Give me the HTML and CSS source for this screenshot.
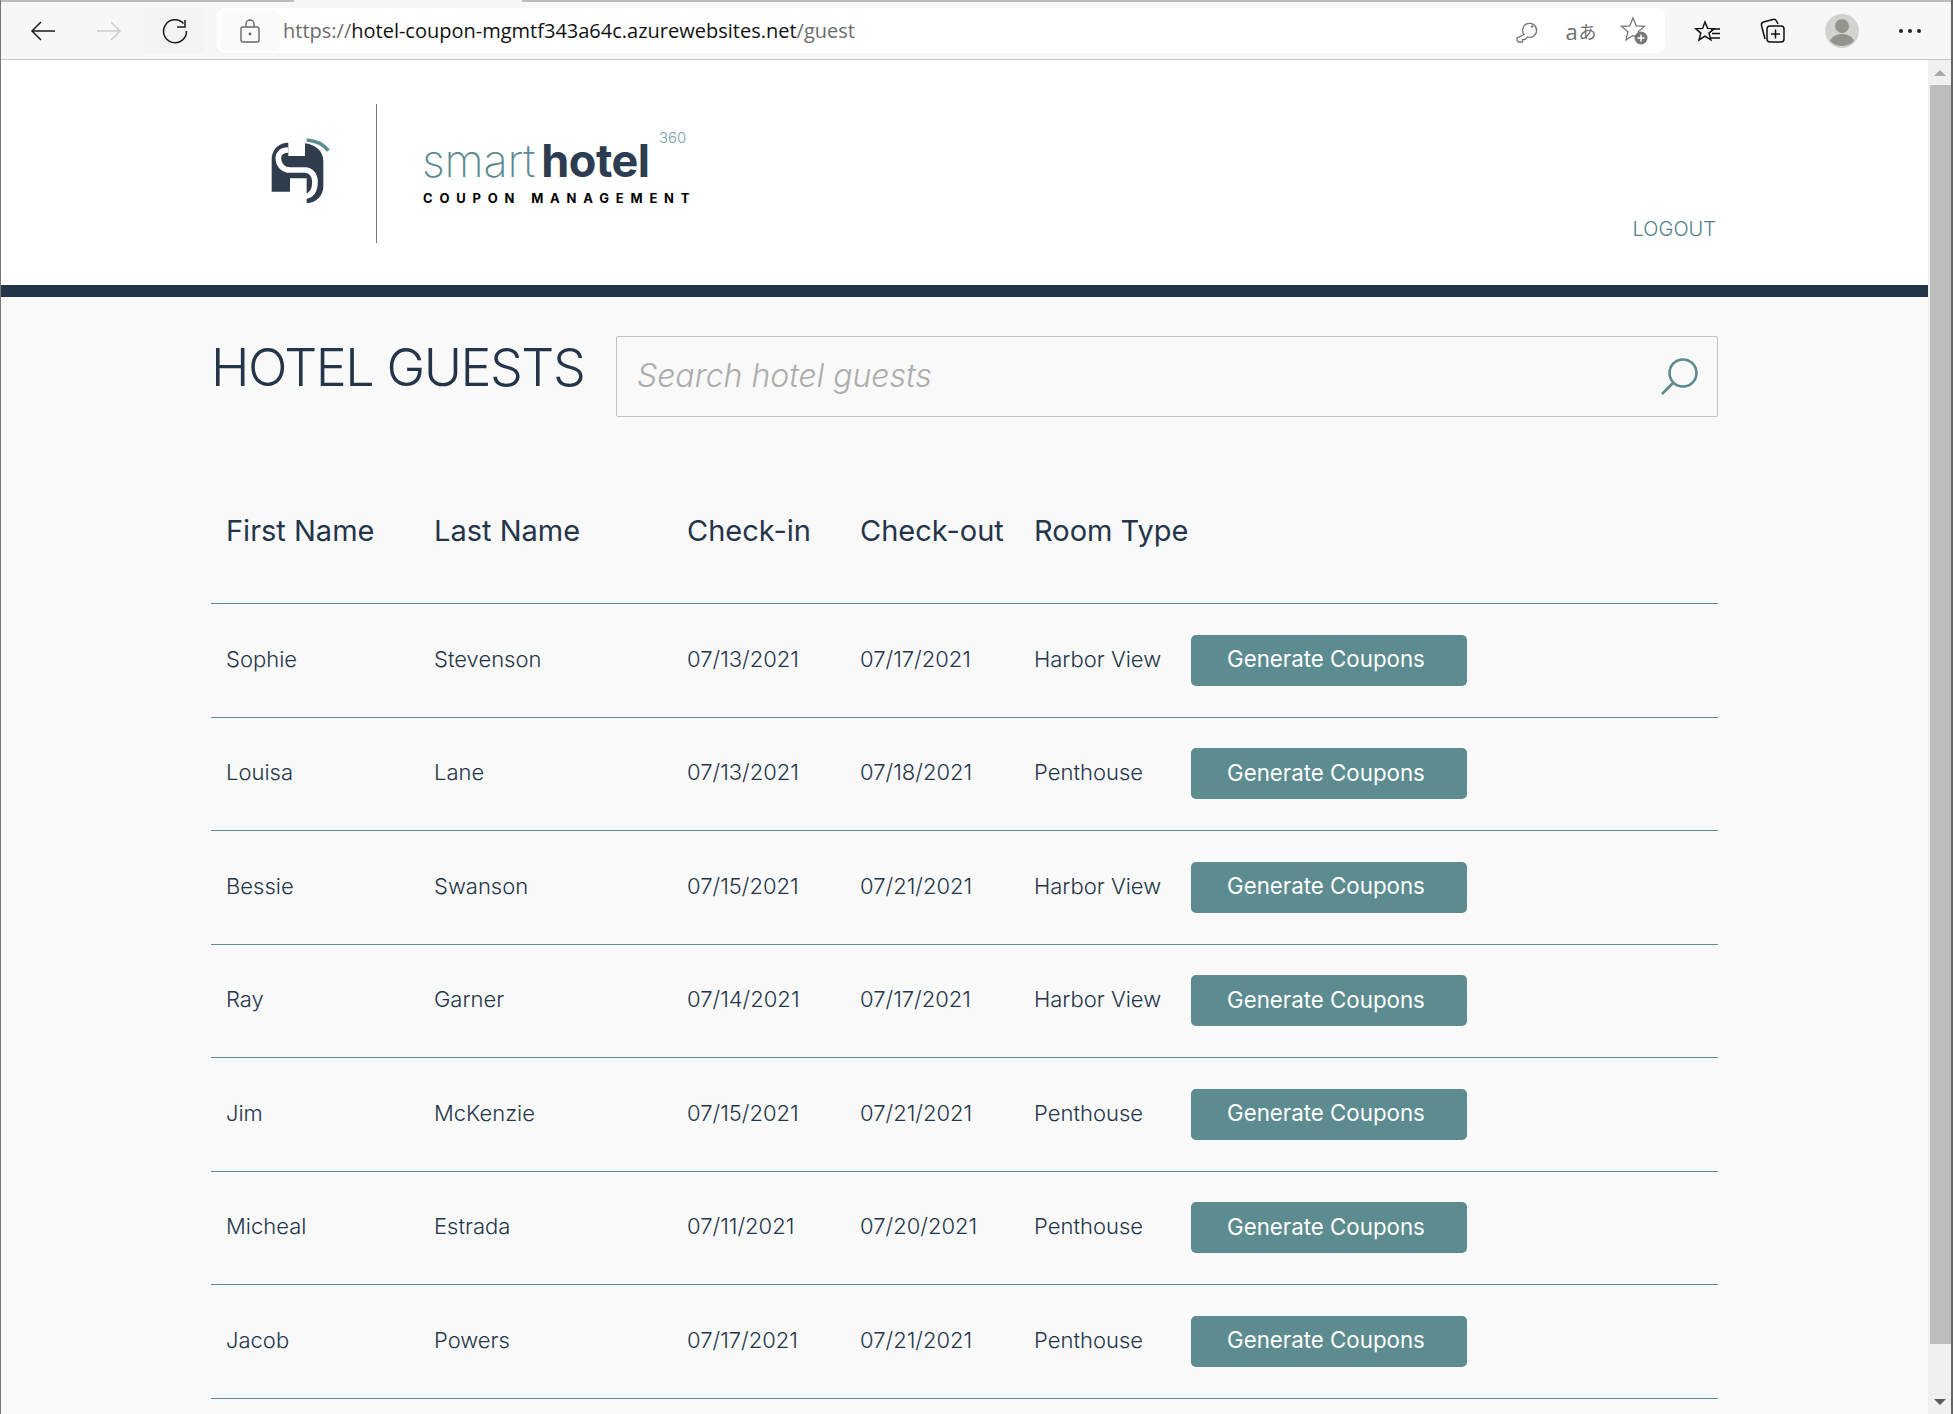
FILE: index.html
```html
<!DOCTYPE html>
<html>
  <head>
    <meta charset="utf-8" />
    <link rel="stylesheet" href="styles.css">
  </head>
  <body>
    <div class="toolbar">
      <div class="tab-edge"></div>
      <div class="toolbar-row">
        <div class="nav-btn">
          <svg width="30" height="30" viewBox="0 0 30 30"><path d="M26 15H3M12 6l-9 9 9 9" fill="none" stroke="#1a1a1a" stroke-width="1.500"/></svg>
        </div>
        <div class="nav-btn">
          <svg width="30" height="30" viewBox="0 0 30 30"><path d="M3 15h23M17 6l9 9-9 9" fill="none" stroke="#cdcdcd" stroke-width="1.500"/></svg>
        </div>
        <div class="nav-btn reload">
          <svg width="30" height="30" viewBox="0 0 30 30"><path d="M24.500 7.500A11.500 11.500 0 1 0 27.500 15M26 4v7h-8" fill="none" stroke="#1a1a1a" stroke-width="1.500"/></svg>
        </div>
        <div class="address">
          <div class="lock">
            <svg width="24" height="26" viewBox="0 0 24 26"><rect x="3" y="9" width="18" height="15" rx="2" fill="none" stroke="#666" stroke-width="1.400"/><path d="M8 9V6a4 4 0 0 1 8 0v3" fill="none" stroke="#666" stroke-width="1.400"/><circle cx="12" cy="16" r="1.400" fill="#666"/></svg>
          </div>
          <div class="url"><span class="url-dim">https://</span>hotel-coupon-mgmtf343a64c.azurewebsites.net<span class="url-dim">/guest</span></div>
          <div class="address-icons">
            <div class="addr-slot">
              <svg width="24" height="24" viewBox="0 0 24 24"><path d="M9 15.500a7 7 0 1 1 3.500 2.500L10 20.500H7.500V23H3.500L2 21.500v-2.500z" fill="none" stroke="#777" stroke-width="1.300"/><circle cx="17" cy="7.500" r="1.200" fill="#777"/></svg>
            </div>
            <div class="addr-slot translate"><span class="translate-a">a</span>あ</div>
            <div class="addr-slot">
              <svg width="30" height="30" viewBox="0 0 30 30"><path d="M13 2l3.200 7.800 8.300.6-6.400 5.300 2 8-7.100-4.300-7 4.400 2-8.100L1.500 10.400l8.300-.6z" fill="none" stroke="#777" stroke-width="1.300"/><circle cx="21" cy="22" r="6.500" fill="#777"/><path d="M17.500 22h7M21 18.500v7" stroke="#fff" stroke-width="1.500"/></svg>
            </div>
          </div>
        </div>
        <div class="tool-icons">
          <div class="tool-slot">
            <svg width="28" height="28" viewBox="0 0 28 28"><path d="M11 3l2.600 6.400 6.400.4-5 4.300 1.800 6.800-5.800-3.700-6 3.800 1.800-6.900-5-4.300 6.800-.4z" fill="none" stroke="#111" stroke-width="1.500" transform="translate(1 2)"/><path d="M18 12h9M19 16.500h8M18 21h9" stroke="#111" stroke-width="1.300"/></svg>
          </div>
          <div class="tool-slot">
            <svg width="28" height="28" viewBox="0 0 28 28"><path d="M6 22L2.500 8.500a3 3 0 0 1 2-3.500L14 2.500a3 3 0 0 1 3.500 1.500L19 7" fill="none" stroke="#111" stroke-width="1.500"/><rect x="8" y="9" width="17" height="16" rx="3" fill="none" stroke="#111" stroke-width="1.500"/><path d="M16.500 12.500v9M12 17h9" stroke="#111" stroke-width="1.500"/></svg>
          </div>
          <div class="tool-slot avatar">
            <svg width="34" height="34" viewBox="0 0 34 34"><circle cx="17" cy="17" r="17" fill="#d3d2cf"/><circle cx="17" cy="12" r="7" fill="#96928d"/><path d="M5 27c2-5 7-7 12-7s10 2 12 7a17 17 0 0 1-24 0z" fill="#96928d"/></svg>
          </div>
          <div class="tool-slot more"><span></span><span></span><span></span></div>
        </div>
      </div>
    </div>

    <div class="viewport">
      <div class="page">
        <div class="header">
          <div class="brand">
            <div class="logo-mark">
              <svg width="80" height="80" viewBox="0 0 240 240">
                <path d="M140 30C165 32 190 42 205 62" fill="none" stroke="#5c8c90" stroke-width="11"/>
                <path d="M85 38C55 38 35 60 35 88V185H90V145H140V220C170 218 190 195 190 170V95C190 65 170 45 135 40V78H85Z" fill="#2f3c4c"/>
                <path d="M85 60C64 60 55 72 55 85C55 105 70 120 90 120H135C155 120 165 138 165 155C165 180 155 198 135 198" fill="none" stroke="#fff" stroke-width="17"/>
              </svg>
            </div>
            <div class="brand-text">
              <div class="brand-name"><span class="brand-smart">smart</span><span class="brand-hotel">hotel</span><span class="brand-360">360</span></div>
              <div class="brand-sub">COUPON MANAGEMENT</div>
            </div>
          </div>
          <a class="logout">LOGOUT</a>
        </div>
        <div class="header-bar"></div>

        <div class="content">
          <div class="title-row">
            <h1 class="page-title">HOTEL GUESTS</h1>
            <div class="search">
              <span class="search-text">Search hotel guests</span>
              <svg class="search-icon" width="40" height="42" viewBox="0 0 40 42"><circle cx="24" cy="16" r="13.500" fill="none" stroke="#5c8c90" stroke-width="2.600"/><path d="M14 26L3 37" stroke="#5c8c90" stroke-width="2.600"/></svg>
            </div>
          </div>

          <table class="guests">
            <thead>
              <tr><th>First Name</th><th>Last Name</th><th>Check-in</th><th>Check-out</th><th>Room Type</th><th></th></tr>
            </thead>
            <tbody>
              <tr><td>Sophie</td><td>Stevenson</td><td>07/13/2021</td><td>07/17/2021</td><td>Harbor View</td><td><button class="gen-btn">Generate Coupons</button></td></tr>
              <tr><td>Louisa</td><td>Lane</td><td>07/13/2021</td><td>07/18/2021</td><td>Penthouse</td><td><button class="gen-btn">Generate Coupons</button></td></tr>
              <tr><td>Bessie</td><td>Swanson</td><td>07/15/2021</td><td>07/21/2021</td><td>Harbor View</td><td><button class="gen-btn">Generate Coupons</button></td></tr>
              <tr><td>Ray</td><td>Garner</td><td>07/14/2021</td><td>07/17/2021</td><td>Harbor View</td><td><button class="gen-btn">Generate Coupons</button></td></tr>
              <tr><td>Jim</td><td>McKenzie</td><td>07/15/2021</td><td>07/21/2021</td><td>Penthouse</td><td><button class="gen-btn">Generate Coupons</button></td></tr>
              <tr><td>Micheal</td><td>Estrada</td><td>07/11/2021</td><td>07/20/2021</td><td>Penthouse</td><td><button class="gen-btn">Generate Coupons</button></td></tr>
              <tr><td>Jacob</td><td>Powers</td><td>07/17/2021</td><td>07/21/2021</td><td>Penthouse</td><td><button class="gen-btn">Generate Coupons</button></td></tr>
            </tbody>
          </table>
        </div>
      </div>

      <div class="scrollbar">
        <div class="scroll-up"></div>
        <div class="scroll-thumb"></div>
        <div class="scroll-down"></div>
      </div>
    </div>
  </body>
</html>
```

FILE: styles.css
```css
html,
body {
  margin: 0;
  height: 100%;
  overflow: hidden;
}

body {
  display: flex;
  flex-direction: column;
  font-family: Inter, 'Noto Sans', sans-serif;
  background: #f9f9f9;
  color: #24354a;
  border-left: 1px solid #777;
  border-right: 2px solid #666;
  box-sizing: border-box;
}

/* browser chrome */
.toolbar {
  height: 60px;
  flex: none;
  background: #f7f7f7;
  border-bottom: 1px solid #c9c9c9;
  box-sizing: border-box;
}

.tab-edge {
  height: 2px;
  background: linear-gradient(to right, #bdbdbd 293px, #f7f7f7 293px, #f7f7f7 521px, #bdbdbd 521px);
}

.toolbar-row {
  display: flex;
  align-items: center;
  height: 57px;
  padding-left: 13px;
}

.nav-btn {
  width: 60px;
  height: 45px;
  margin-right: 5px;
  display: flex;
  align-items: center;
  justify-content: center;
}

.nav-btn.reload {
  background: #f3f3f3;
  margin-right: 13px;
}

.address {
  width: 1448px;
  height: 45px;
  flex: none;
  background: #fff;
  border-radius: 8px;
  display: flex;
  align-items: center;
}

.lock {
  width: 60px;
  height: 39px;
  margin-left: 3px;
  background: #fafafa;
  border-radius: 6px;
  display: flex;
  align-items: center;
  justify-content: center;
}

.url {
  margin-left: 3px;
  font-family: 'Open Sans', sans-serif;
  font-size: 20px;
  color: #111;
  white-space: nowrap;
}

.url-dim {
  color: #6d6d6d;
}

.address-icons {
  margin-left: auto;
  display: flex;
  align-items: center;
  padding-right: 3px;
}

.addr-slot {
  width: 54px;
  display: flex;
  align-items: center;
  justify-content: center;
}

.translate {
  font-family: 'Noto Sans CJK JP', sans-serif;
  font-size: 18px;
  font-weight: 400;
  color: #6d6d6d;
}

.translate-a {
  font-family: 'Open Sans', sans-serif;
  font-size: 22px;
  line-height: 20px;
  margin-right: 1px;
}

.tool-icons {
  display: flex;
  align-items: center;
  margin-left: 9px;
}

.tool-slot {
  width: 66px;
  display: flex;
  align-items: center;
  justify-content: center;
}

.avatar {
  margin-left: 3px;
}

.more {
  gap: 5px;
  margin-left: 2px;
}

.more span {
  width: 4px;
  height: 4px;
  border-radius: 50%;
  background: #222;
}

/* page */
.viewport {
  flex: 1;
  display: flex;
  min-height: 0;
}

.page {
  flex: 1;
  min-width: 0;
  overflow: hidden;
}

.header {
  height: 225px;
  background: #fff;
  display: flex;
  padding-left: 259px;
  padding-right: 212px;
  justify-content: space-between;
}

.brand {
  display: flex;
  align-items: flex-start;
}

.logo-mark {
  width: 117px;
  height: 139px;
  margin-top: 44px;
  padding-top: 26px;
  box-sizing: border-box;
  border-right: 1px solid #777;
}

.brand-text {
  margin-left: 45px;
  margin-top: 76px;
}

.brand-name {
  position: relative;
  font-size: 45px;
  line-height: 50px;
  letter-spacing: -0.200px;
  white-space: nowrap;
}

.brand-smart {
  color: #5c8c90;
  font-weight: 200;
  margin-right: 6px;
}

.brand-hotel {
  color: #2c3d52;
  font-weight: 700;
  letter-spacing: -0.500px;
}

.brand-360 {
  position: absolute;
  left: 237px;
  top: -7px;
  font-size: 15px;
  line-height: 18px;
  letter-spacing: 0;
  font-weight: 300;
  color: #7aa0a8;
}

.brand-sub {
  margin-top: 3px;
  margin-left: 1px;
  font-size: 13px;
  line-height: 18px;
  font-weight: 700;
  letter-spacing: 6.800px;
  color: #000;
  white-space: nowrap;
}

.logout {
  align-self: flex-start;
  margin-top: 156px;
  font-size: 20px;
  line-height: 26px;
  font-weight: 300;
  color: #4f7f84;
}

.header-bar {
  height: 12px;
  background: #24354a;
}

.content {
  padding: 39px 0 0 210px;
  width: 1507px;
}

.title-row {
  display: flex;
  align-items: flex-start;
}

.page-title {
  margin: 0;
  width: 405px;
  flex: none;
  font-size: 52px;
  line-height: 64px;
  letter-spacing: -1.450px;
  font-weight: 300;
  color: #24354a;
  white-space: nowrap;
}

.search {
  flex: 1;
  height: 81px;
  box-sizing: border-box;
  border: 1px solid #c4c4c4;
  border-radius: 2px;
  display: flex;
  align-items: center;
  justify-content: space-between;
  padding: 0 18px 0 20px;
}

.search-text {
  font-size: 32px;
  line-height: 40px;
  margin-top: -2px;
  font-style: italic;
  font-weight: 300;
  color: #acacac;
}

.search-icon {
  margin-top: 3px;
}

.guests {
  border-collapse: collapse;
  table-layout: fixed;
  width: 100%;
  margin-top: 25px;
}

.guests th:nth-child(1) { width: 208px; }
.guests th:nth-child(2) { width: 253px; }
.guests th:nth-child(3) { width: 173px; }
.guests th:nth-child(4) { width: 174px; }
.guests th:nth-child(5) { width: 157px; }

.guests th {
  box-sizing: border-box;
  height: 161px;
  padding: 16px 15px 0;
  text-align: left;
  font-size: 29px;
  font-weight: 400;
  color: #24354a;
  white-space: nowrap;
  border-bottom: 1px solid #5c8c90;
}

.guests td {
  box-sizing: border-box;
  height: 113px;
  padding: 0 15px 3px;
  font-size: 22px;
  font-weight: 300;
  color: #24354a;
  white-space: nowrap;
  border-bottom: 1px solid #5c8c90;
}

/* rows are 113.4px in the original, so alternate */
.guests tbody tr:nth-child(odd) td {
  height: 114px;
}

.gen-btn {
  display: block;
  width: 276px;
  height: 51px;
  padding: 0 36px 3px;
  margin-top: 3px;
  border: none;
  border-radius: 5px;
  background: #5c8c90;
  color: #fff;
  font-family: inherit;
  font-size: 22.300px;
  font-weight: 400;
  text-align: left;
  white-space: nowrap;
}

/* scrollbar */
.scrollbar {
  width: 23px;
  flex: none;
  display: flex;
  flex-direction: column;
  background: #f0f0f0;
}

.scroll-up,
.scroll-down {
  height: 25px;
  flex: none;
  display: flex;
  align-items: center;
  justify-content: center;
}

.scroll-up::after {
  content: "";
  border: 6px solid transparent;
  border-top: 0;
  border-bottom: 6px solid #a8a8a8;
}

.scroll-down::after {
  content: "";
  border: 6px solid transparent;
  border-bottom: 0;
  border-top: 6px solid #5a5a5a;
}

.scroll-thumb {
  flex: 1;
  margin: 0 0 45px 2px;
  background: #bdbdbd;
}
```
